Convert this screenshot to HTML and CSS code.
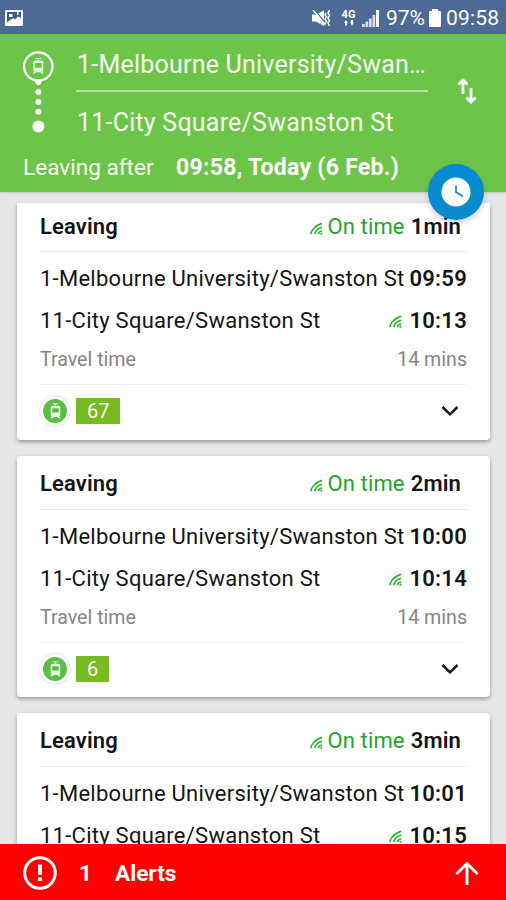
FILE: index.html
```html
<!DOCTYPE html>
<html lang="en">
<head>
<meta charset="utf-8">
<title>Trips</title>
<link rel="stylesheet" href="styles.css">
</head>
<body>
<svg class="defs" width="0" height="0">
  <symbol id="tram" viewBox="0 0 16 20">
    <path d="M4.500 1h7M8 1v3" fill="none" stroke="currentColor" stroke-width="1.200"/>
    <path fill="currentColor" fill-rule="evenodd" d="M4 3.500h8q2 0 2 2V15q0 1.500-1.500 1.500L14.500 19h-3l-1-1.500h-5L4.500 19h-3l2-2.500Q2 16.500 2 15V5.500q0-2 2-2zM4 6.500V12h8V6.500z"/>
  </symbol>
  <symbol id="live" viewBox="0 0 13 13">
    <path d="M1 12.200C1 10 3 4.500 12 1.300M4.800 12.200C5 10 7 6.300 12 5.300M8.300 12.200C8.500 10.700 9.700 9.300 12 9" fill="none" stroke="currentColor" stroke-width="1.500"/>
    <circle cx="11.300" cy="11.800" r="1" fill="currentColor"/>
  </symbol>
  <symbol id="chevron" viewBox="0 0 18 12">
    <path d="M1.500 2 9 9.300 16.500 2" fill="none" stroke="currentColor" stroke-width="2.500"/>
  </symbol>
</svg>
<div class="screen">
  <div class="status">
    <svg class="picture" width="18" height="16" viewBox="0 0 18 16"><rect width="18" height="16" rx="1.500" fill="#fff"/><path d="M2 2h14v6l-3-1.500-3 3L8.500 8 5 10l-3 2.500z" fill="#3c5b88"/><path d="M4 4h3.500v3H4zM12 2h1.500v3H12z" fill="#fff"/></svg>
    <svg class="mute" width="19" height="17" viewBox="0 0 19 17"><path d="M0 4.500h4l8-4v15.500l-8-4.500H0z" fill="#fff"/><path d="M2.500 0l11 13" stroke="#4c6a94" stroke-width="1.500"/><path d="M1 0l12.500 15" stroke="#fff" stroke-width="1.500"/><path d="M14 3l-1 1.500 1.500 2L13 9l1.500 2-1.500 2.500M17.500 0L16 3l1.500 2.500L16 8l1.500 2.500L16 13l1.500 3" fill="none" stroke="#fff" stroke-width="1.500"/></svg>
    <div class="net"><span>4G</span><svg width="10" height="6" viewBox="0 0 10 6"><path d="M0 3h4L2 0zM1 3h2v2.500H1zM6 2.500h4L8 5.500zM7 0h2v3H7z" fill="#fff"/></svg></div>
    <svg class="signal" width="17" height="17" viewBox="0 0 17 17"><path d="M0 14h2.700v3H0zM3.500 11.500h2.700V17H3.500zM7 8.500h2.700V17H7zM10.500 5h2.700v12h-2.700z" fill="#d5deea"/><path d="M14 0h3v17h-3z" fill="#fff"/></svg>
    <span class="percent">97%</span>
    <svg class="battery" width="12" height="18" viewBox="0 0 12 18"><path d="M3 0h6v2h2q1 0 1 1v14q0 1-1 1H1q-1 0-1-1V3q0-1 1-1h2z" fill="#fff"/></svg>
    <span class="clock">09:58</span>
  </div>

  <header class="search">
    <div class="route">
      <svg class="track" width="32" height="84" viewBox="0 0 32 84"><circle cx="16.300" cy="15.500" r="14.200" fill="none" stroke="#fff" stroke-width="2.300"/><path d="M11.500 29l4.800 5.500L21 29z" fill="#fff"/><use href="#tram" x="9.500" y="6" width="13.500" height="18" color="#e3f5d8"/><g fill="#fff"><circle cx="16.400" cy="31" r="2.900"/><circle cx="16.400" cy="41" r="3"/><circle cx="16.400" cy="51" r="3"/><circle cx="16.400" cy="60.700" r="3"/><circle cx="16.400" cy="75.500" r="6"/></g></svg>
      <div class="stops">
        <div class="stop origin">1-Melbourne University/Swan…</div>
        <div class="stop">11-City Square/Swanston St</div>
      </div>
      <svg class="swap" width="20" height="26" viewBox="0 0 20 26"><path d="M6 16V3M1.500 6.500 6 2l4.500 4.500M14 10v13M9.500 19.500 14 24l4.500-4.500" fill="none" stroke="#fff" stroke-width="2.800"/></svg>
    </div>
    <div class="when"><span>Leaving after</span><b>09:58, Today (6 Feb.)</b></div>
    <div class="fab"><svg width="30" height="30" viewBox="0 0 30 30"><circle cx="15" cy="15" r="14.500" fill="#fff"/><path d="M15 8.500V15l7 4.500" fill="none" stroke="#2b86bd" stroke-width="1.800"/></svg></div>
  </header>

  <main class="trips">
    <section class="card clipped">
      <div class="head"><b>Leaving</b><span class="live"><svg><use href="#live"/></svg>On time</span><b class="mins">1min</b></div>
      <div class="legs">
        <div class="leg"><span>1-Melbourne University/Swanston St</span><b>09:59</b></div>
        <div class="leg"><span>11-City Square/Swanston St</span><svg><use href="#live"/></svg><b>10:13</b></div>
        <div class="travel"><span>Travel time</span><span>14 mins</span></div>
      </div>
      <div class="foot"><span class="mode"><svg><use href="#tram"/></svg></span><span class="line">67</span><svg class="more"><use href="#chevron"/></svg></div>
    </section>
    <section class="card">
      <div class="head"><b>Leaving</b><span class="live"><svg><use href="#live"/></svg>On time</span><b class="mins">2min</b></div>
      <div class="legs">
        <div class="leg"><span>1-Melbourne University/Swanston St</span><b>10:00</b></div>
        <div class="leg"><span>11-City Square/Swanston St</span><svg><use href="#live"/></svg><b>10:14</b></div>
        <div class="travel"><span>Travel time</span><span>14 mins</span></div>
      </div>
      <div class="foot"><span class="mode"><svg><use href="#tram"/></svg></span><span class="line">6</span><svg class="more"><use href="#chevron"/></svg></div>
    </section>
    <section class="card">
      <div class="head"><b>Leaving</b><span class="live"><svg><use href="#live"/></svg>On time</span><b class="mins">3min</b></div>
      <div class="legs">
        <div class="leg"><span>1-Melbourne University/Swanston St</span><b>10:01</b></div>
        <div class="leg"><span>11-City Square/Swanston St</span><svg><use href="#live"/></svg><b>10:15</b></div>
      </div>
    </section>
  </main>

  <footer class="alerts">
    <svg width="34" height="34" viewBox="0 0 34 34"><circle cx="17" cy="17" r="15.300" fill="none" stroke="#fff" stroke-width="3"/><path d="M15 8.500h4v10.500h-4zM15 21.500h4v3.600h-4z" fill="#fff"/></svg>
    <b class="count">1</b><b class="label">Alerts</b>
    <svg class="up" width="24" height="24" viewBox="0 0 24 24"><path d="M12 24V3M1.500 13 12 2.500 22.500 13" fill="none" stroke="#fff" stroke-width="3"/></svg>
  </footer>
</div>
</body>
</html>
```
FILE: styles.css
```css
* { box-sizing: border-box; }
body { margin: 0; font-family: Roboto, "Liberation Sans", sans-serif; color: #151515; }
b { font-weight: 600; }
svg { flex: none; display: block; }
.defs { position: absolute; }
.screen { width: 506px; height: 900px; display: flex; flex-direction: column; overflow: hidden; background: #e7e7e7; }

.status { height: 34px; flex: none; display: flex; align-items: center; padding: 2px 6px 0 5px; background: #4c6a94; color: #fff; font-size: 21px; }
.mute { margin-left: auto; }
.net { margin-left: 10px; width: 15px; display: flex; flex-direction: column; align-items: center; font-size: 11px; line-height: 10px; font-weight: 700; }
.signal { margin-left: 6px; }
.percent { margin-left: 7px; width: 39px; white-space: nowrap; }
.battery { margin-left: 4px; }
.clock { margin-left: 5px; width: 54px; white-space: nowrap; letter-spacing: .2px; }

.search { height: 158px; flex: none; position: relative; background: #6cc449; color: #f7ffef; box-shadow: 0 1px 2px rgba(0,0,0,.15); }
.route { display: flex; height: 112px; }
.track { margin: 17px 0 0 22px; }
.stops { width: 352px; margin-left: 22px; font-size: 25px; letter-spacing: .22px; }
.stop { height: 60px; line-height: 61px; padding-left: 1px; white-space: nowrap; }
.origin { height: 58px; border-bottom: 2px solid #b9deaa; }
.swap { margin: 44px 0 0 29px; }
.when { display: flex; align-items: center; height: 42px; padding-left: 23px; font-size: 22.6px; white-space: nowrap; }
.when span { width: 153px; }
.when b { font-weight: 700; font-size: 23px; letter-spacing: .28px; color: #fff; }
.fab { position: absolute; left: 428px; top: 130px; width: 56px; height: 56px; border-radius: 50%; background: #078bd0; display: grid; place-items: center; box-shadow: 0 3px 6px rgba(0,0,0,.2); z-index: 1; }

.trips { flex: 1; min-height: 0; overflow: hidden; padding: 11px 16px 0 17px; }
.card { height: 241px; margin-bottom: 16px; padding: 0 23px; background: #fff; border-radius: 4px; box-shadow: 0 2px 4px rgba(0,0,0,.35); }
.clipped { height: 237px; border-radius: 0 0 4px 4px; }
.head { height: 54px; display: flex; align-items: center; padding: 1px 6px 0 0; border-bottom: 1px solid #ebebeb; font-size: 22px; white-space: nowrap; }
.head b { letter-spacing: .15px; }
.clipped .head { height: 49px; padding: 0 6px 1px 0; }
.live { margin-left: auto; display: flex; align-items: center; gap: 4px; color: #23a52a; letter-spacing: .15px; }
.live svg, .leg svg { width: 13px; height: 13px; color: #19b51c; }
.live svg { margin-top: 4px; }
.mins { margin-left: 6px; }
.legs { padding-top: 5px; }
.leg { height: 42px; display: flex; align-items: center; font-size: 22px; letter-spacing: .26px; white-space: nowrap; }
.leg b { margin-left: auto; }
.leg svg { margin: 3px 0 0 auto; }
.leg svg + b { margin-left: 7px; }
.travel { height: 37px; display: flex; align-items: center; justify-content: space-between; color: #858585; font-size: 19.6px; }
.foot { margin-top: 6px; border-top: 1px solid #efefef; height: 53px; display: flex; align-items: center; }
.mode { width: 30px; height: 30px; border-radius: 50%; background: #5bbd46; border: 3px solid #fff; box-shadow: 0 0 2px rgba(0,0,0,.3); color: #e9f9e4; display: grid; place-items: center; }
.mode svg { width: 13px; height: 16px; }
.line { height: 26px; margin-left: 6px; padding: 0 11px; background: #76bc21; color: #fff; font-size: 20px; line-height: 27px; }
.more { width: 18px; height: 12px; margin-left: auto; margin-right: 8px; }

.alerts { height: 56px; flex: none; display: flex; align-items: center; padding: 2px 27px 0 23px; background: #fe0000; color: #fff; font-size: 22.6px; }
.alerts b { font-weight: 700; }
.count { margin-left: 22px; width: 13px; }
.label { margin-left: 23px; }
.up { margin-left: auto; }
```
